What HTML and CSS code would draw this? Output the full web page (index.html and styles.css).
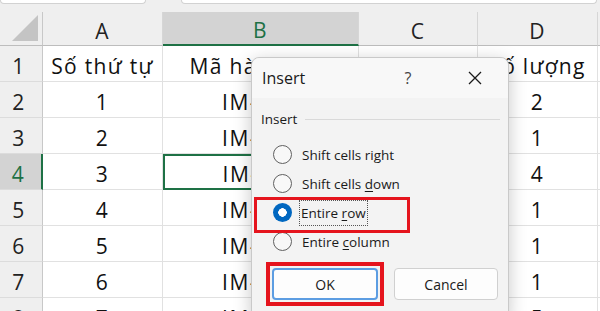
FILE: index.html
```html
<!DOCTYPE html>
<html lang="vi">

<head>
  <meta charset="UTF-8">
  <title>Insert</title>
  <link rel="stylesheet" href="styles.css">
</head>

<body>

  <div class="sheet">
    <div class="topbar">
      <div class="namebox"></div>
      <div class="formula"></div>
    </div>

    <div class="grid">
      <div class="corner">
        <svg width="28" height="28" viewBox="0 0 28 28"><path d="M27 1 L27 27 L1 27 Z" fill="#c4c4c4"/></svg>
      </div>
      <div class="colhead">A</div>
      <div class="colhead active">B</div>
      <div class="colhead">C</div>
      <div class="colhead">D</div>
      <div class="colhead rest"></div>

      <div class="rowhead">1</div>
      <div class="cell">Số thứ tự</div>
      <div class="cell">Mã hàng hóa</div>
      <div class="cell">Tên hàng</div>
      <div class="cell">Số lượng</div>
      <div class="cell rest"></div>

      <div class="rowhead">2</div>
      <div class="cell">1</div>
      <div class="cell code">IM-001</div>
      <div class="cell"></div>
      <div class="cell">2</div>
      <div class="cell rest"></div>

      <div class="rowhead">3</div>
      <div class="cell">2</div>
      <div class="cell code">IM-002</div>
      <div class="cell"></div>
      <div class="cell">1</div>
      <div class="cell rest"></div>

      <div class="rowhead active">4</div>
      <div class="cell">3</div>
      <div class="cell code selected">IM-003</div>
      <div class="cell"></div>
      <div class="cell">4</div>
      <div class="cell rest"></div>

      <div class="rowhead">5</div>
      <div class="cell">4</div>
      <div class="cell code">IM-004</div>
      <div class="cell"></div>
      <div class="cell">1</div>
      <div class="cell rest"></div>

      <div class="rowhead">6</div>
      <div class="cell">5</div>
      <div class="cell code">IM-005</div>
      <div class="cell"></div>
      <div class="cell">1</div>
      <div class="cell rest"></div>

      <div class="rowhead">7</div>
      <div class="cell">6</div>
      <div class="cell code">IM-006</div>
      <div class="cell"></div>
      <div class="cell">1</div>
      <div class="cell rest"></div>

      <div class="rowhead">8</div>
      <div class="cell">7</div>
      <div class="cell code">IM-007</div>
      <div class="cell"></div>
      <div class="cell">5</div>
      <div class="cell rest"></div>
    </div>

    <!-- hộp thoại Insert -->
    <div class="dialog">
      <div class="dialog-title">
        <span class="title-text">Insert</span>
        <span class="help">?</span>
        <span class="close">
          <svg width="14" height="14" viewBox="0 0 14 14"><path d="M1 1 L13 13 M13 1 L1 13" stroke="#1a1a1a" stroke-width="1.3"/></svg>
        </span>
      </div>

      <div class="dialog-body">
        <div class="group-label">
          <span>Insert</span>
          <div class="group-line"></div>
        </div>

        <div class="options">
          <div class="option"><span class="radio"></span><span>Shift cells ri<u>g</u>ht</span></div>
          <div class="option"><span class="radio"></span><span>Shift cells <u>d</u>own</span></div>
          <div class="option"><span class="radio checked"></span><span class="focused">Entire <u>r</u>ow</span></div>
          <div class="option"><span class="radio"></span><span>Entire <u>c</u>olumn</span></div>
        </div>

        <div class="buttons">
          <div class="mark-ok">
            <button class="btn btn-ok">OK</button>
          </div>
          <button class="btn">Cancel</button>
        </div>
      </div>

      <div class="mark-row"></div>
    </div>
  </div>

</body>

</html>
```

FILE: styles.css
```css
/* Bảng tính và hộp thoại Insert */
body {
  margin: 0;
  padding: 0;
  background-color: #ffffff;
}

.sheet {
  position: relative;
  width: 600px;
  height: 311px;
  overflow: hidden;
  font-family: "Open Sans", sans-serif;
}

.topbar {
  display: flex;
  gap: 35px;
  height: 12px;
  background-color: #efefef;
}

.namebox,
.formula {
  height: 3px;
  background-color: #ffffff;
  border: 1px solid #d2d2d2;
  border-top: none;
  border-radius: 0 0 4px 4px;
}

.namebox {
  width: 144px;
}

.formula {
  flex: 1;
  margin-right: 3px;
}

.grid {
  display: grid;
  grid-template-columns: 43px 120px 196px 119px 120px 1fr;
  grid-template-rows: 34px repeat(8, 36px);
  font-size: 21px;
  letter-spacing: 1.3px;
  color: #111;
}

.corner {
  display: flex;
  align-items: flex-end;
  justify-content: flex-end;
  padding: 0 3px 3px 0;
  background-color: #efefef;
  border-right: 1px solid #c8c8c8;
  border-bottom: 1px solid #bdbdbd;
}

.colhead {
  display: flex;
  align-items: center;
  justify-content: center;
  padding-top: 4px;
  background-color: #efefef;
  border-right: 1px solid #d6d6d6;
  border-bottom: 1px solid #bdbdbd;
  color: #222;
}

.colhead.active {
  background-color: #d3d3d3;
  color: #1e7145;
  border-bottom: 2px solid #1e7145;
}

.colhead.rest {
  border-right: none;
}

.rowhead {
  display: flex;
  align-items: center;
  justify-content: center;
  padding: 4px 4px 0 0;
  background-color: #efefef;
  border-right: 1px solid #c8c8c8;
  border-bottom: 1px solid #dcdcdc;
  color: #222;
}

.rowhead.active {
  background-color: #d3d3d3;
  color: #1e7145;
  border-right: 2px solid #1e7145;
}

.cell {
  display: flex;
  align-items: center;
  justify-content: center;
  padding-top: 4px;
  border-right: 1px solid #e1e1e1;
  border-bottom: 1px solid #e1e1e1;
  white-space: nowrap;
  overflow: hidden;
}

.cell.code {
  letter-spacing: 1.6px;
}

.cell.selected {
  padding-top: 3px;
  border: 2px solid #1e7145;
}

.cell.rest {
  border-right: none;
}

/* hộp thoại */
.dialog {
  position: absolute;
  left: 251px;
  top: 57px;
  width: 256px;
  height: 262px;
  background-color: #f3f3f3;
  border: 1px solid #c9c9c9;
  border-radius: 8px;
  box-shadow: 0 4px 18px rgba(0, 0, 0, 0.22);
  font-size: 13.5px;
  color: #1a1a1a;
}

.dialog-title {
  display: flex;
  align-items: center;
  height: 40px;
  padding: 0 0 0 10px;
  background-color: #f8f8f8;
  border-radius: 8px 8px 0 0;
}

.title-text {
  font-size: 16px;
  flex: 1;
}

.help {
  width: 22px;
  text-align: center;
  font-size: 16px;
  color: #444;
}

.close {
  display: flex;
  width: 34px;
  margin-left: 39px;
  margin-right: 16px;
  justify-content: center;
}

.dialog-body {
  padding: 11px 8px 0 9px;
}

.group-label {
  display: flex;
  align-items: center;
  gap: 8px;
  height: 20px;
}

.group-line {
  flex: 1;
  height: 1px;
  background-color: #d9d9d9;
}

.options {
  margin-top: 11px;
  padding-left: 12px;
}

.option {
  display: flex;
  align-items: center;
  gap: 10px;
  height: 29px;
}

.option u {
  text-underline-offset: 2px;
}

.radio {
  width: 17px;
  height: 17px;
  border: 1px solid #606060;
  border-radius: 50%;
  background-color: #f8f8f8;
}

.radio.checked {
  width: 19px;
  height: 19px;
  border: none;
  background: radial-gradient(circle, #ffffff 0 4px, #0067c0 4.5px);
}

.focused {
  padding: 3px 1px;
  margin-left: -2px;
  outline: 1px dotted #555;
}

.buttons {
  display: flex;
  align-items: flex-start;
  gap: 10px;
  margin-top: 6px;
  padding-left: 5px;
}

.mark-ok {
  padding: 2px;
  border: 4px solid #e5141d;
}

.buttons > .btn {
  margin-top: 6px;
}

.btn {
  display: block;
  width: 104px;
  height: 32px;
  font-family: "Open Sans", sans-serif;
  font-size: 14px;
  color: #1a1a1a;
  background-color: #fdfdfd;
  border: 1px solid #d0d0d0;
  border-radius: 4px;
}

.btn-ok {
  width: 106px;
  border: 2px solid #5c9de2;
}

.mark-row {
  position: absolute;
  left: 2px;
  top: 139px;
  width: 150px;
  height: 30px;
  border: 3px solid #e5141d;
}
```
